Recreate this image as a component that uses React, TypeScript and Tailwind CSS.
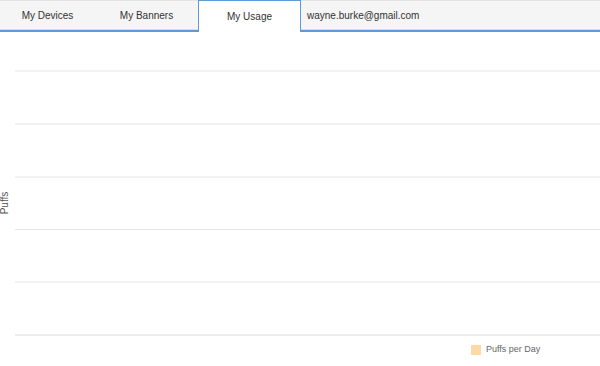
import React from 'react';

const tabs = [
  { label: 'My Devices', width: 'w-[95px]' },
  { label: 'My Banners', width: 'w-[103px]' },
];

const gridLines = [39, 92, 145, 197.5, 250, 303];

const App: React.FC = () => {
  return (
    <div className="w-[600px] h-[366px] bg-white overflow-hidden font-['Liberation_Sans',Arial,sans-serif] text-[#333]">
      {/* Tab bar */}
      <div className="flex h-8 text-[10px]">
        {tabs.map((tab) => (
          <div
            key={tab.label}
            className={`${tab.width} flex items-center justify-center bg-[#f5f5f5] border-t border-[#e3e3e3] border-b-2 border-b-[#5e9ad6] shadow-[inset_0_-1px_0_#dcdcdc]`}
          >
            {tab.label}
          </div>
        ))}
        <div className="w-[103px] flex items-center justify-center bg-white border border-b-0 border-[#5e9ad6]">
          My Usage
        </div>
        <div className="flex-1 flex items-center pl-[6px] bg-[#f5f5f5] border-t border-[#e3e3e3] border-b-2 border-b-[#5e9ad6] shadow-[inset_0_-1px_0_#dcdcdc]">
          wayne.burke@gmail.com
        </div>
      </div>

      {/* Chart */}
      <div className="relative h-[334px]">
        <svg width="600" height="334" className="block">
          {gridLines.map((y, i) => (
            <line
              key={y}
              x1="15"
              x2="600"
              y1={y}
              y2={y}
              stroke={i === gridLines.length - 1 ? '#dcdcdc' : '#e6e6e6'}
              strokeWidth="1"
            />
          ))}
          <text
            x="0"
            y="0"
            transform="translate(8 171) rotate(-90)"
            textAnchor="middle"
            fontSize="10"
            fill="#555"
            fontFamily="Liberation Sans, Arial, sans-serif"
          >
            Puffs
          </text>
        </svg>
        <div className="absolute left-[471px] top-[311px] flex items-center gap-[5px] text-[9px] text-[#666]">
          <span className="w-[10px] h-[10px] bg-[#fdd9a8]" />
          <span>Puffs per Day</span>
        </div>
      </div>
    </div>
  );
};

export default App;
